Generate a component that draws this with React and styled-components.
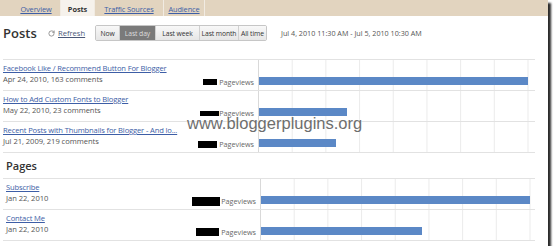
import React from "react";
import styled, { createGlobalStyle } from "styled-components";
import { RotateCw } from "lucide-react";

const Global = createGlobalStyle`
  html, body {
    margin: 0;
    padding: 0;
    background: #fff;
  }
  body {
    font-family: "Open Sans", "Noto Sans", sans-serif;
    color: #444;
  }
`;

const Frame = styled.div`
  position: relative;
  width: 548px;
  height: 246px;
  background: #fff;
  box-shadow: 3px 3px 2px rgba(20, 20, 20, 0.9);
  overflow: hidden;
`;

const TabBar = styled.div`
  display: flex;
  height: 16px;
  padding-left: 12px;
  background: #e2d4bf;
`;

const Tab = styled.div`
  display: flex;
  align-items: center;
  justify-content: center;
  width: ${(p) => p.$w}px;
  padding-top: 2px;
  font-size: 7.4px;
  letter-spacing: -0.1px;
  border-right: 1px solid #f1ebe2;
  background: ${(p) => (p.$active ? "#f6f2ec" : "transparent")};
  color: ${(p) => (p.$active ? "#333" : "#3d5ea6")};
  font-weight: ${(p) => (p.$active ? 700 : 400)};
  text-decoration: ${(p) => (p.$active ? "none" : "underline")};
`;

const Header = styled.div`
  display: flex;
  align-items: center;
  height: 16px;
  margin-top: 9px;
  padding-left: 3px;
`;

const Title = styled.h1`
  margin: 0;
  font-size: 13px;
  font-weight: 600;
  color: #333;
  width: 45px;
`;

const Refresh = styled.div`
  display: flex;
  align-items: center;
  gap: 3px;
  font-size: 7.6px;
  color: #4a5878;
  text-decoration: underline;
  width: 47px;
`;

const RangeGroup = styled.div`
  display: flex;
  height: 14px;
  border: 1px solid #c6c6c6;
  border-radius: 2px;
  overflow: hidden;
`;

const RangeButton = styled.div`
  display: flex;
  align-items: center;
  justify-content: center;
  width: ${(p) => p.$w}px;
  font-size: 6.8px;
  letter-spacing: -0.1px;
  border-right: 1px solid #d0d0d0;
  color: ${(p) => (p.$active ? "#dcdcdc" : "#333")};
  background: ${(p) =>
    p.$active ? "#7a7a7a" : "linear-gradient(#f8f8f8, #e6e6e6)"};
  &:last-child {
    border-right: none;
  }
`;

const DateRange = styled.div`
  margin-left: 14px;
  font-size: 7.2px;
  color: #555;
`;

const Table = styled.div`
  margin: ${(p) => p.$top}px 13px 0 3px;
  border-top: 1px solid #e2e2e2;
`;

const Row = styled.div`
  display: grid;
  grid-template-columns: ${(p) => p.$label}px 1fr;
  height: 30px;
  border-bottom: 1px solid #e2e2e2;
`;

const LabelCell = styled.div`
  display: flex;
  justify-content: space-between;
  padding: 3px 4px 0 ${(p) => p.$indent}px;
`;

const TextBlock = styled.div`
  display: flex;
  flex-direction: column;
  line-height: 11px;
`;

const Link = styled.a`
  font-size: 7.6px;
  letter-spacing: -0.15px;
  color: #3d5ea6;
  text-decoration: underline;
  white-space: nowrap;
`;

const Meta = styled.span`
  font-size: 7.6px;
  letter-spacing: -0.05px;
  color: #555;
`;

const Views = styled.div`
  display: flex;
  align-items: center;
  align-self: flex-start;
  margin-top: 14px;
  font-size: 7.2px;
  color: #666;
`;

const Redact = styled.span`
  display: inline-block;
  width: ${(p) => p.$w}px;
  height: ${(p) => p.$h}px;
  margin-right: ${(p) => p.$gap}px;
  background: #000;
`;

const ChartCell = styled.div`
  border-left: 1px solid #d9d9d9;
  background-image: linear-gradient(to right, #ebebeb 1px, transparent 1px);
  background-size: 33.7px 100%;
  background-position: 32.7px 0;
  padding-top: 17px;
`;

const Bar = styled.div`
  height: 8px;
  background: #5b88c6;
`;

const SectionTitle = styled.h2`
  margin: 0;
  height: 25px;
  display: flex;
  align-items: center;
  padding-left: 6px;
  font-size: 11px;
  font-weight: 600;
  color: #333;
`;

const Watermark = styled.div`
  position: absolute;
  left: 187px;
  top: 114px;
  font-family: "Liberation Sans", Arial, sans-serif;
  font-size: 16.5px;
  color: #6e6e6e;
  text-shadow: 0 0 2px #fff;
`;

const tabs = [
  { label: "Overview", w: 48 },
  { label: "Posts", w: 33, active: true },
  { label: "Traffic Sources", w: 68 },
  { label: "Audience", w: 40 },
];

const ranges = [
  { label: "Now", w: 23 },
  { label: "Last day", w: 35, active: true },
  { label: "Last week", w: 43 },
  { label: "Last month", w: 38 },
  { label: "All time", w: 27 },
];

const posts = [
  {
    title: "Facebook Like / Recommend Button For Blogger",
    meta: "Apr 24, 2010, 163 comments",
    redact: [14, 6, 2],
    value: 1,
  },
  {
    title: "How to Add Custom Fonts to Blogger",
    meta: "May 22, 2010, 23 comments",
    redact: [19, 5, 0],
    value: 0.327,
  },
  {
    title: "Recent Posts with Thumbnails for Blogger - And lo...",
    meta: "Jul 21, 2009, 219 comments",
    redact: [19, 7, 2],
    value: 0.287,
  },
];

const pages = [
  { title: "Subscribe", meta: "Jan 22, 2010", redact: [28, 9, 1], value: 1 },
  { title: "Contact Me", meta: "Jan 22, 2010", redact: [23, 8, 2], value: 0.6 },
];

const StatRow = ({ item, label, indent, max }) => (
  <Row $label={label}>
    <LabelCell $indent={indent}>
      <TextBlock>
        <Link>{item.title}</Link>
        <Meta>{item.meta}</Meta>
      </TextBlock>
      <Views>
        <Redact $w={item.redact[0]} $h={item.redact[1]} $gap={item.redact[2]} />
        Pageviews
      </Views>
    </LabelCell>
    <ChartCell>
      <Bar style={{ width: Math.round(item.value * max) }} />
    </ChartCell>
  </Row>
);

const App = () => {
  return (
    <>
      <Global />
      <Frame>
        <TabBar>
          {tabs.map((t) => (
            <Tab key={t.label} $w={t.w} $active={t.active}>
              {t.label}
            </Tab>
          ))}
        </TabBar>
        <Header>
          <Title>Posts</Title>
          <Refresh>
            <RotateCw size={7} color="#777" strokeWidth={2.5} />
            Refresh
          </Refresh>
          <RangeGroup>
            {ranges.map((r) => (
              <RangeButton key={r.label} $w={r.w} $active={r.active}>
                {r.label}
              </RangeButton>
            ))}
          </RangeGroup>
          <DateRange>Jul 4, 2010 11:30 AM - Jul 5, 2010 10:30 AM</DateRange>
        </Header>
        <Table $top={18}>
          {posts.map((p) => (
            <StatRow key={p.title} item={p} label={255} indent={0} max={269} />
          ))}
        </Table>
        <SectionTitle>Pages</SectionTitle>
        <Table $top={0}>
          {pages.map((p) => (
            <StatRow key={p.title} item={p} label={257} indent={3} max={269} />
          ))}
        </Table>
        <Watermark>www.bloggerplugins.org</Watermark>
      </Frame>
    </>
  );
};

export default App;
